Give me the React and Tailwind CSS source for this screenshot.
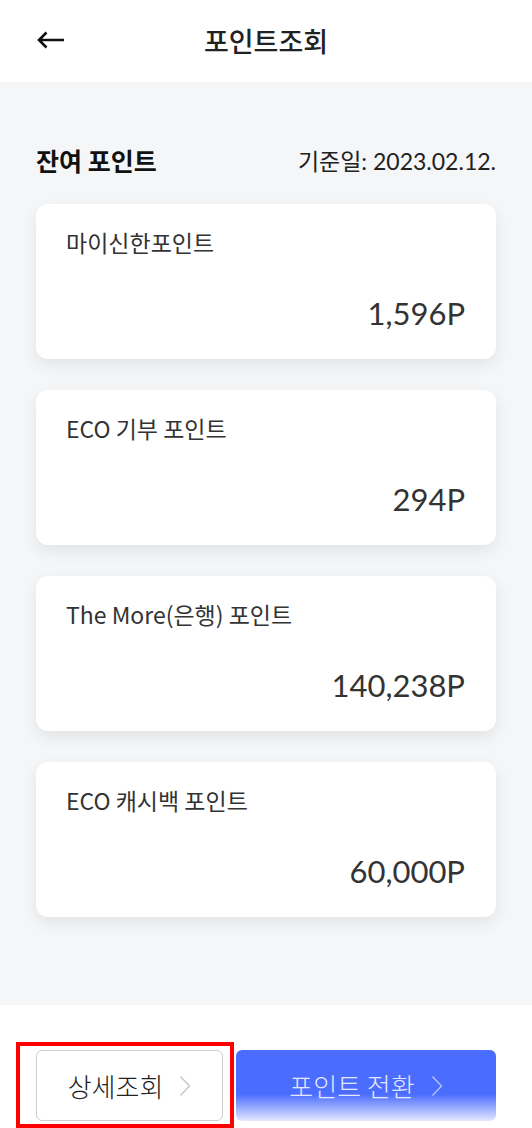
import React from 'react';

const points = [
  { name: '마이신한포인트', amount: '1,596P' },
  { name: 'ECO 기부 포인트', amount: '294P' },
  { name: 'The More(은행) 포인트', amount: '140,238P' },
  { name: 'ECO 캐시백 포인트', amount: '60,000P' },
];

const kr = { fontFamily: '"Noto Sans CJK KR", "Noto Sans", sans-serif' };
const lato = { fontFamily: 'Lato, "Noto Sans CJK KR", sans-serif' };

const Chevron = ({ className }) => (
  <svg width="12" height="22" viewBox="0 0 12 22" fill="none" className={className}>
    <path d="M1.5 1.5 L10.5 11 L1.5 20.5" stroke="currentColor" strokeWidth="1.3" />
  </svg>
);

const App = () => {
  return (
    <div className="relative w-[532px] h-[1128px] flex flex-col bg-white text-[#222]" style={kr}>
      {/* Header */}
      <header className="h-[82px] shrink-0 bg-white flex items-center relative">
        <button className="absolute left-[36px] top-[29px] w-[30px] h-[22px] flex items-center">
          <svg width="30" height="22" viewBox="0 0 30 22" fill="none">
            <path d="M28 11 H3 M10.5 3.5 L3 11 L10.5 18.5" stroke="#111" strokeWidth="2.6" strokeLinejoin="miter" />
          </svg>
        </button>
        <h1 className="w-full text-center text-[27px] font-medium leading-[36px] text-[#222]">포인트조회</h1>
      </header>

      {/* Main */}
      <main className="flex-1 bg-[#f5f6f8] px-[36px] pt-[61px]">
        <div className="flex items-center justify-between h-[34px]">
          <h2 className="text-[25px] font-bold leading-[34px] text-[#111]">잔여 포인트</h2>
          <p className="text-[23px] leading-[34px] text-[#222]" style={lato}>
            <span style={kr}>기준일</span>: 2023.02.12.
          </p>
        </div>

        <div className="mt-[27px] flex flex-col gap-[31px]">
          {points.map((p) => (
            <div
              key={p.name}
              className="h-[155px] bg-white rounded-[12px] shadow-[0_6px_16px_rgba(0,0,0,0.08)] pl-[30px] pr-[31px] pt-[22px] flex flex-col"
            >
              <p className="text-[23px] leading-[32px] text-[#333]">{p.name}</p>
              <p className="mt-[36px] text-right text-[31px] leading-[38px] text-[#333]" style={lato}>
                {p.amount}
              </p>
            </div>
          ))}
        </div>
      </main>

      {/* Footer */}
      <footer className="h-[123px] shrink-0 bg-white px-[36px] pt-[45px] flex gap-[13px]">
        <button className="w-[187px] h-[71px] rounded-[6px] border border-[#cfcfcf] bg-white flex items-center justify-center gap-[16px]">
          <span className="text-[26px] font-light leading-[32px] text-[#222]">상세조회</span>
          <Chevron className="text-[#c4c4c4]" />
        </button>
        <button className="flex-1 h-[71px] rounded-[6px] bg-[linear-gradient(180deg,#4a6cff_0%,#4a6cff_62%,#e4e9ff_100%)] flex items-center justify-center gap-[16px]">
          <span className="text-[26px] font-light leading-[32px] text-[#e3e8ff]">포인트 전환</span>
          <Chevron className="text-[#b9c6ff]" />
        </button>
      </footer>

      {/* annotation */}
      <div className="absolute left-[16px] top-[1042px] w-[218px] h-[86px] border-[4px] border-[#ff0000] pointer-events-none" />
    </div>
  );
};

export default App;
